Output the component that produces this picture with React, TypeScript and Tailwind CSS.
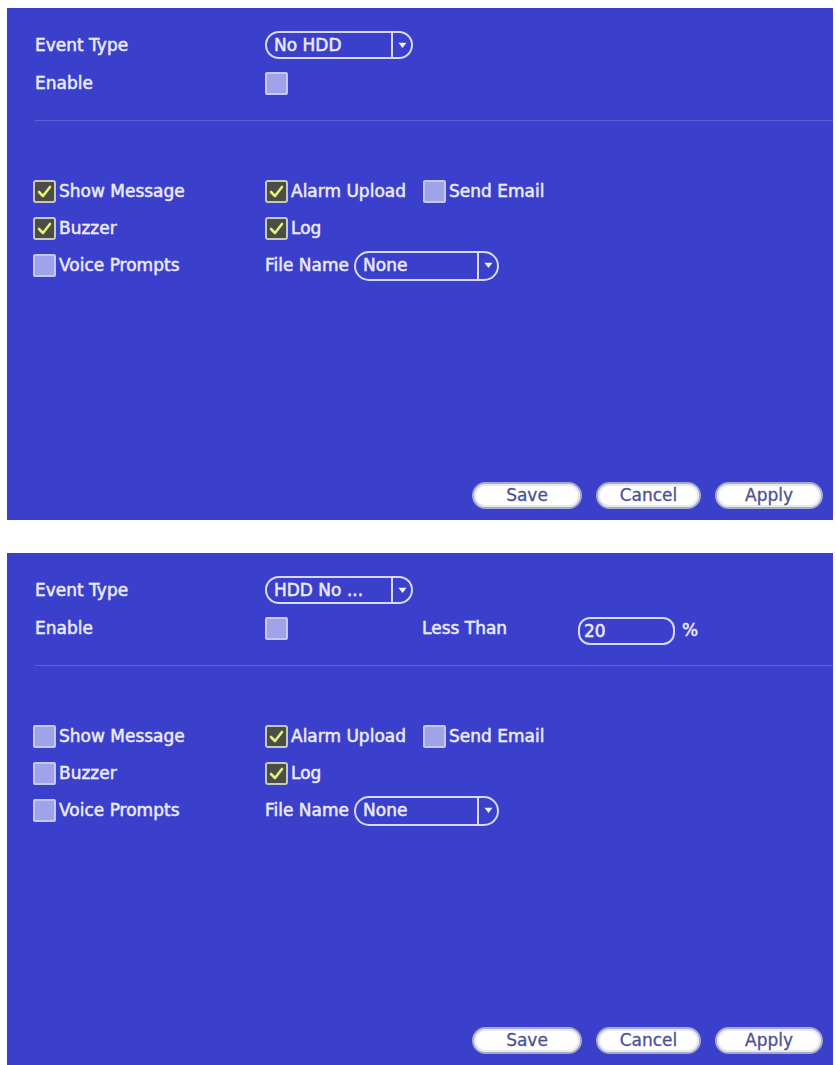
import React from "react";

const font = "font-['DejaVu_Sans',sans-serif]";
const txt =
  "text-[17px] leading-none text-[#e9e9fb] [-webkit-text-stroke:0.35px_#e9e9fb] [text-shadow:0_0_1px_rgba(255,255,255,0.5)]";

function Box({ checked }: { checked?: boolean }) {
  if (checked) {
    return (
      <span className="flex h-[23px] w-[23px] shrink-0 items-center justify-center rounded-[3px] border-2 border-[#c8c8bc] bg-[#4d4d47]">
        <svg width="15" height="13" viewBox="0 0 15 13">
          <path d="M2 7 L6 11 L13 2" fill="none" stroke="#e4f27a" strokeWidth="2.6" strokeLinecap="round" strokeLinejoin="round" />
        </svg>
      </span>
    );
  }
  return <span className="block h-[23px] w-[23px] shrink-0 rounded-[2px] border-2 border-[#c6c8f4] bg-[#9fa3ea]" />;
}

function Select({ value, width, height }: { value: string; width: string; height: string }) {
  return (
    <div className={`flex items-center rounded-full border-2 border-[#d7d9f7] ${width} ${height}`}>
      <span className={`${txt} flex-1 pl-[7px]`}>{value}</span>
      <span className="flex h-full w-[20px] items-center justify-center border-l-2 border-[#d7d9f7]">
        <svg width="9" height="7" viewBox="0 0 9 7">
          <path d="M0.5 0.8 H8.5 L4.5 6 Z" fill="#f2f2ff" />
        </svg>
      </span>
    </div>
  );
}

function Btn({ label, width }: { label: string; width: string }) {
  return (
    <div
      className={`flex h-[27px] items-center justify-center rounded-full border-2 border-[#a9abc6] bg-white shadow-[inset_0_0_0_2px_#e6e8f6] text-[17px] leading-none text-[#4b5292] [-webkit-text-stroke:0.3px_#4b5292] ${width}`}
    >
      {label}
    </div>
  );
}

function Check({ checked, label }: { checked?: boolean; label: string }) {
  return (
    <div className="flex items-center gap-[3px]">
      <Box checked={checked} />
      <span className={txt}>{label}</span>
    </div>
  );
}

function Panel({
  eventType,
  lessThan,
  show,
  buzzer,
}: {
  eventType: string;
  lessThan?: boolean;
  show?: boolean;
  buzzer?: boolean;
}) {
  return (
    <div className={`ml-[7px] flex h-[512px] w-[826px] flex-col bg-[#3a40cc] pl-[26px] pt-[23px] ${font}`}>
      <div className="flex h-[28px] items-center">
        <span className={`${txt} w-[232px] pl-[2px]`}>Event Type</span>
        <Select value={eventType} width="w-[148px]" height="h-[28px]" />
      </div>
      <div className="mt-[13px] flex h-[28px] items-start">
        <span className={`${txt} w-[232px] pl-[2px] pt-[3px]`}>Enable</span>
        <Box />
        {lessThan && (
          <>
            <span className={`${txt} ml-[134px] w-[156px] pt-[3px]`}>Less Than</span>
            <div className="flex h-[28px] w-[97px] items-center rounded-[12px] border-2 border-[#d7d9f7]">
              <span className={`${txt} pl-[4px]`}>20</span>
            </div>
            <span className={`${txt} ml-[7px] pt-[5px] text-[14px]`}>%</span>
          </>
        )}
      </div>
      <div className="ml-[2px] mt-[20px] h-px bg-[#5a60d8]" />
      <div className="mt-[52px] flex flex-col">
        <div className="flex h-[37px] items-center">
          <div className="w-[232px]">
            <Check checked={show} label="Show Message" />
          </div>
          <Check checked label="Alarm Upload" />
          <div className="ml-[17px]">
            <Check label="Send Email" />
          </div>
        </div>
        <div className="flex h-[37px] items-center">
          <div className="w-[232px]">
            <Check checked={buzzer} label="Buzzer" />
          </div>
          <Check checked label="Log" />
        </div>
        <div className="flex h-[37px] items-center">
          <div className="w-[232px]">
            <Check label="Voice Prompts" />
          </div>
          <span className={txt}>File Name</span>
          <div className="ml-[5px]">
            <Select value="None" width="w-[145px]" height="h-[30px]" />
          </div>
        </div>
      </div>
      <div className="mt-auto flex justify-end gap-[14px] pb-[11px] pr-[10px]">
        <Btn label="Save" width="w-[110px]" />
        <Btn label="Cancel" width="w-[105px]" />
        <Btn label="Apply" width="w-[108px]" />
      </div>
    </div>
  );
}

export default function App() {
  return (
    <div className="h-[1065px] w-[837px] overflow-hidden bg-white pt-[8px]">
      <Panel eventType="No HDD" show buzzer />
      <div className="h-[33px]" />
      <Panel eventType="HDD No ..." lessThan />
    </div>
  );
}
